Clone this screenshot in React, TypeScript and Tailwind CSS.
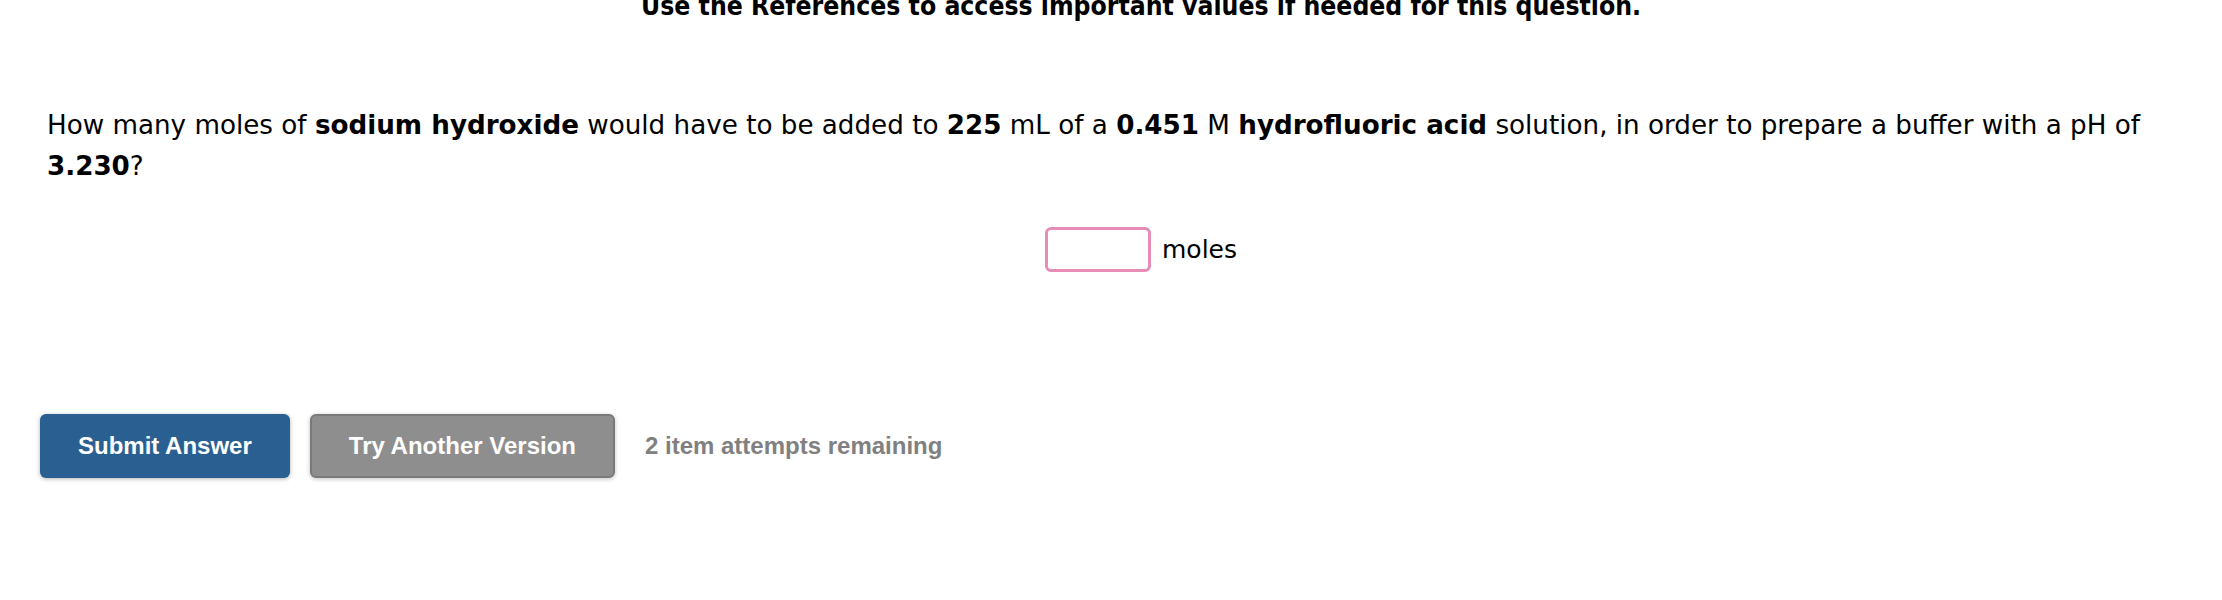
import React from "react";

const bodyFont = "font-['DejaVu_Sans','Verdana',sans-serif]";
const buttonFont = "font-['Liberation_Sans','Arial',sans-serif]";

function QuestionText() {
  return (
    <p className={`${bodyFont} text-[26.2px] leading-[41px] text-black pl-[47px] pr-[47px] mt-[86px]`}>
      How many moles of <b>sodium hydroxide</b> would have to be added to{" "}
      <b>225</b> mL of a <b>0.451</b> M <b>hydrofluoric acid</b> solution, in
      order to prepare a buffer with a pH of <b>3.230</b>?
    </p>
  );
}

function AnswerRow() {
  return (
    <div className="flex justify-center items-center gap-[11px] pl-[60px] mt-[40px]">
      <input
        type="text"
        className="w-[106px] h-[45px] border-[3px] border-[#e78bb7] rounded-[6px] outline-none bg-white"
      />
      <span className={`${bodyFont} text-[25px] leading-[29px] text-black`}>moles</span>
    </div>
  );
}

function Actions() {
  return (
    <div className={`${buttonFont} flex items-center pl-[40px] mt-[142px]`}>
      <button className="h-[64px] px-[38px] rounded-[6px] bg-[#2a5f91] text-white text-[24px] font-bold shadow-[0_1px_4px_rgba(0,0,0,0.3)]">
        Submit Answer
      </button>
      <button className="h-[64px] px-[37px] ml-[20px] rounded-[6px] bg-[#8e8e8e] border-2 border-[#7a7a7a] text-white text-[24px] font-bold shadow-[0_1px_4px_rgba(0,0,0,0.25)]">
        Try Another Version
      </button>
      <span className="ml-[30px] text-[24px] font-bold text-[#808080]">
        2 item attempts remaining
      </span>
    </div>
  );
}

export default function App() {
  return (
    <div className="w-full h-[600px] bg-white overflow-hidden">
      <div
        className={`font-['DejaVu_Sans_Condensed','DejaVu_Sans',sans-serif] font-bold text-[26.3px] leading-[26px] text-black text-center pl-[60px] -mt-[7px]`}
      >
        Use the References to access important values if needed for this question.
      </div>
      <QuestionText />
      <AnswerRow />
      <Actions />
    </div>
  );
}
